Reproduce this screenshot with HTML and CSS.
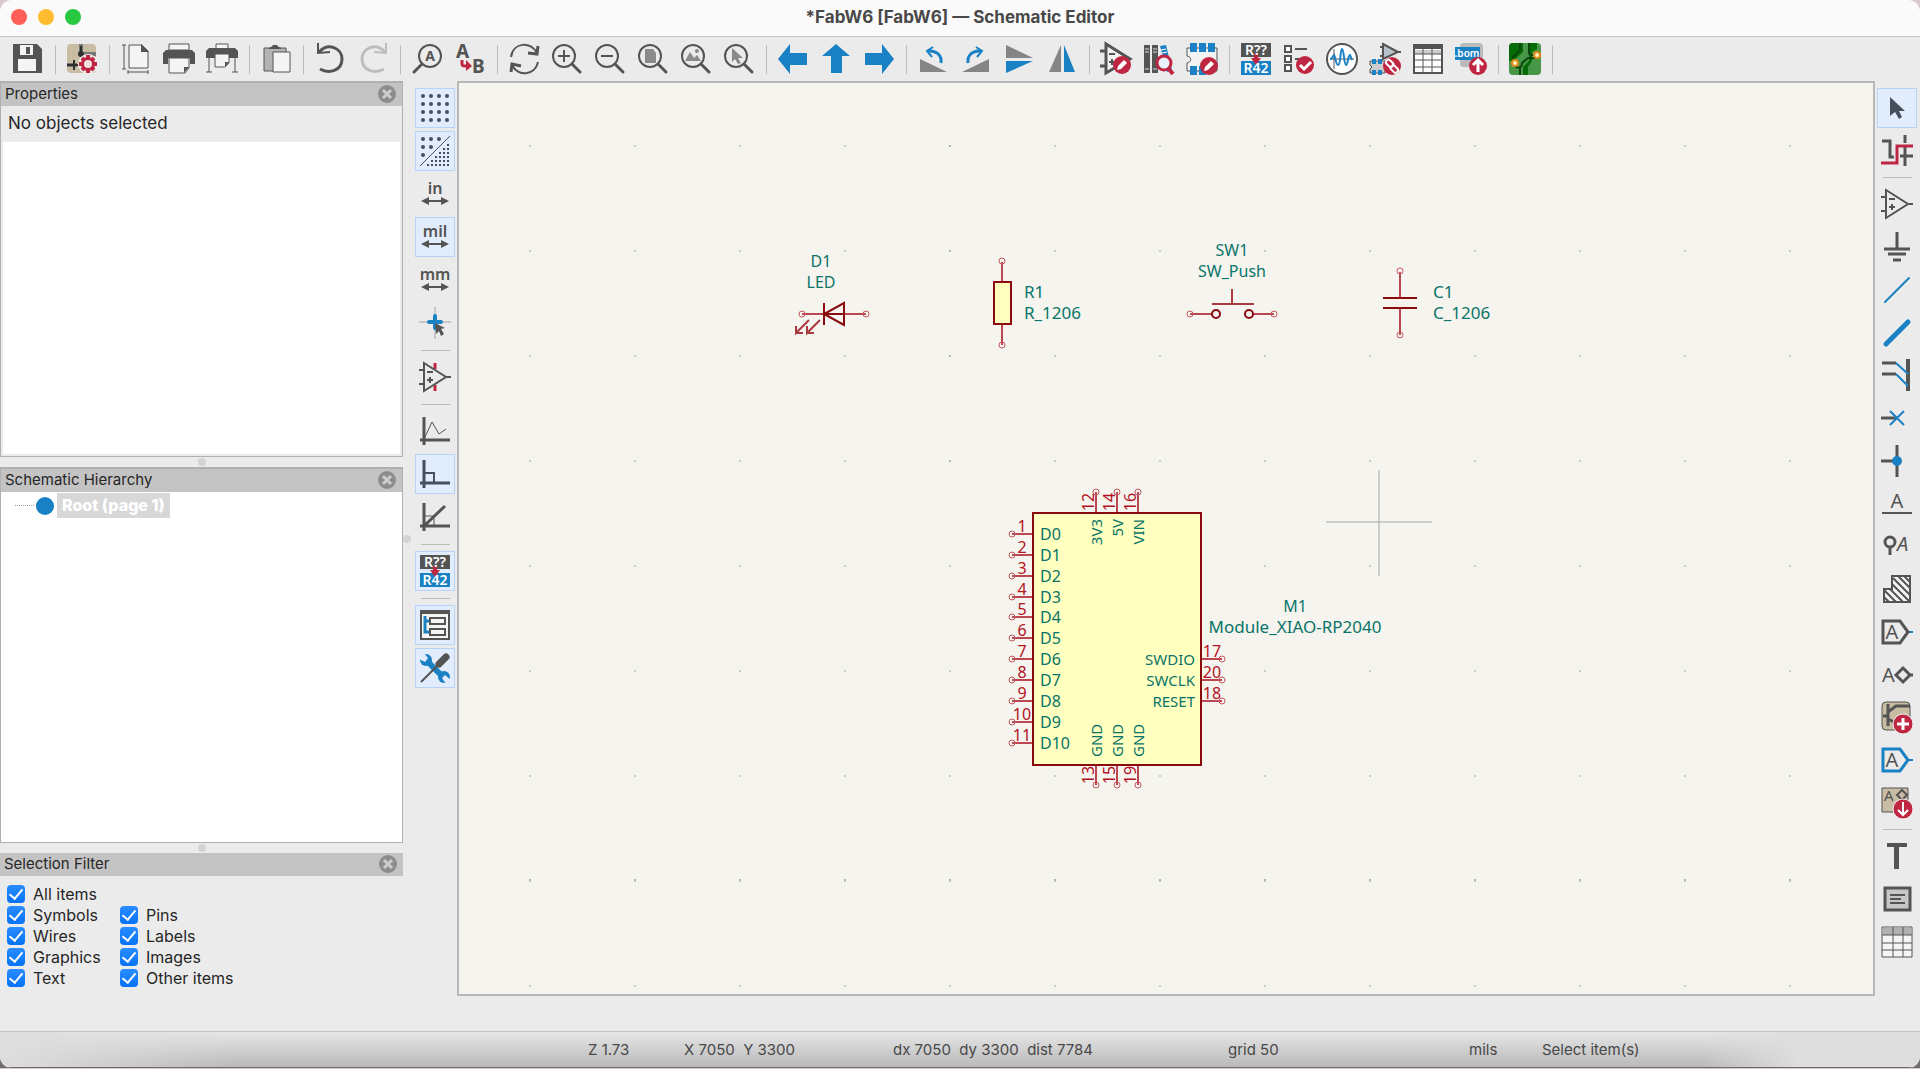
FILE: index.html
```html
<!DOCTYPE html>
<html lang="en">
<head>
<meta charset="UTF-8">
<meta name="viewport" content="width=device-width, initial-scale=1">
<title>*FabW6 [FabW6] — Schematic Editor</title>
<link rel="stylesheet" href="styles.css">
</head>
<body>

<!-- Shared icon parts -->
<svg class="defs" width="0" height="0" aria-hidden="true">
    <defs>
        <symbol id="lens" viewBox="0 0 32 32">
            <circle cx="13" cy="13" r="11" fill="none" stroke="#545454" stroke-width="2"/>
            <path d="M21 21l8 8" stroke="#545454" stroke-width="3" stroke-linecap="round"/>
        </symbol>
        <symbol id="opamp" viewBox="0 0 32 32">
            <path d="M5 2v28L27 16zM0 9h5M0 23h5M27 16h5" fill="none" stroke="#545454" stroke-width="2"/>
            <path d="M8 11h6M8 19h6M11 16v6" stroke="#545454" stroke-width="2"/>
        </symbol>
        <symbol id="pencil" viewBox="0 0 20 20">
            <circle cx="10" cy="10" r="9" fill="#bf2641"/>
            <path d="M5 15l1-4 6-6 3 3-6 6z" fill="#fff"/>
        </symbol>
        <symbol id="annotate" viewBox="0 0 32 32">
            <path d="M1 0h30v14H1z" fill="#545454"/>
            <path d="M1 18h30v14H1z" fill="#1a81c4"/>
            <path d="M14 11h4v4h3l-5 7-5-7h3z" fill="#bf2641"/>
            <text x="16" y="12" text-anchor="middle" class="ico-tag">R??</text>
            <text x="16" y="30" text-anchor="middle" class="ico-tag">R42</text>
        </symbol>
        <symbol id="units" viewBox="0 0 32 12">
            <path d="M7 6h18" stroke="#545454" stroke-width="2"/>
            <path d="M2 6l8-4v8zM30 6l-8-4v8z" fill="#545454"/>
        </symbol>
        <symbol id="close" viewBox="0 0 18 18">
            <circle cx="9" cy="9" r="9" fill="#8c8c8c"/>
            <path d="M5 5l8 8M13 5l-8 8" stroke="#cecece" stroke-width="3"/>
        </symbol>
    </defs>
</svg>

<div class="window">

<header class="titlebar">
    <div class="lights">
        <button class="light red" aria-label="Close"></button>
        <button class="light yellow" aria-label="Minimize"></button>
        <button class="light green" aria-label="Zoom"></button>
    </div>
    <h1>*FabW6 [FabW6] — Schematic Editor</h1>
</header>

<!-- Top toolbar -->
<nav class="toolbar top">
    <button class="tool" aria-label="Save"><svg viewBox="0 0 32 32"><path d="M1 1h24l5 5v24H1z" fill="#545454"/><path d="M8 2h13v10H8zM6 16h18v12H6z" fill="#f4f4f4"/><path d="M14 4h4v7h-4z" fill="#545454"/></svg></button>
    <span class="sep"></span>
    <button class="tool" aria-label="Schematic Setup"><svg viewBox="0 0 32 32"><rect x="1" y="1" width="29" height="29" rx="4" fill="#c8bda2"/><path d="M15 1v9M1 22h10M18 11h12" stroke="#777" stroke-width="4"/><path d="M1 22h11M15 3v10M8 17v10" stroke="#2f2f2f" stroke-width="2"/><circle cx="15" cy="11" r="3" fill="#2f2f2f"/><circle cx="22" cy="21" r="10" fill="#f0eee9"/><path d="M22 12v18M13 21h18M16 15l12 12M28 15L16 27" stroke="#bf2641" stroke-width="4"/><circle cx="22" cy="21" r="7" fill="#bf2641"/><circle cx="22" cy="21" r="4" fill="#eee4df"/></svg></button>
    <span class="sep"></span>
    <button class="tool" aria-label="Page Settings"><svg viewBox="0 0 32 32"><path d="M9 2h13l6 6v17H9z" fill="#f5f5f5" stroke="#545454"/><path d="M21 1v8h8z" fill="#545454"/><path d="M4 2v24M2 2h4M2 26h4M8 29h20M8 27v4M28 27v4" stroke="#545454" stroke-width="1"/></svg></button>
    <button class="tool" aria-label="Print"><svg viewBox="0 0 32 32"><path d="M6 1h20v6H6z" fill="#f5f5f5" stroke="#545454"/><path d="M3 7h26l3 3v11h-5v-6H5v6H0V10z" fill="#545454"/><path d="M6 15h20v10l-4 5H6z" fill="#f5f5f5" stroke="#545454"/><path d="M26 24h-5v6z" fill="#545454"/></svg></button>
    <button class="tool" aria-label="Plot"><svg viewBox="0 0 32 32"><path d="M10 1h12v5H10z" fill="#f5f5f5" stroke="#545454"/><path d="M3 5h26l3 3v7H0V8z" fill="#545454"/><path d="M9 11h14v9l-4 4H9z" fill="#f5f5f5" stroke="#545454"/><path d="M23 19h-4v5z" fill="#545454"/><path d="M3 14v15M29 14v15M0 29h6M26 29h6" stroke="#545454"/></svg></button>
    <span class="sep"></span>
    <button class="tool" aria-label="Paste"><svg viewBox="0 0 32 32"><path d="M4 5h22v23H4z" fill="#b3b3b3" stroke="#545454"/><path d="M9 5c1-1 3-1 4-3h4c1 2 3 2 4 3v1H9z" fill="#545454"/><path d="M13 9h17v20H13z" fill="#f5f5f5" stroke="#545454"/></svg></button>
    <span class="sep"></span>
    <button class="tool" aria-label="Undo"><svg viewBox="0 0 32 32"><path d="M5 9C14-1 28 5 28 16c0 12-13 15-22 10" fill="none" stroke="#545454" stroke-width="3"/><path d="M4 0v10l12-1" fill="none" stroke="#545454" stroke-width="2"/></svg></button>
    <button class="tool" aria-label="Redo" disabled><svg viewBox="0 0 32 32"><path d="M28 9C19-1 5 5 5 16c0 12 13 15 22 10" fill="none" stroke="#bdbdbd" stroke-width="3"/><path d="M29 0v10l-12-1" fill="none" stroke="#bdbdbd" stroke-width="2"/></svg></button>
    <span class="sep"></span>
    <button class="tool" aria-label="Find"><svg viewBox="0 0 32 32"><circle cx="19" cy="13" r="11" fill="none" stroke="#545454" stroke-width="2"/><path d="M11 21l-8 8" stroke="#545454" stroke-width="3" stroke-linecap="round"/><text x="19" y="18" text-anchor="middle" class="ico-bold">A</text></svg></button>
    <button class="tool" aria-label="Find and Replace"><svg viewBox="0 0 32 32"><text x="2" y="15" class="ico-big">A</text><text x="18" y="30" class="ico-big">B</text><path d="M8 17v4q0 2 3 2h3" fill="none" stroke="#bf2641" stroke-width="3"/><path d="M12 17v11l6-5z" fill="#bf2641"/></svg></button>
    <span class="sep"></span>
    <button class="tool" aria-label="Refresh"><svg viewBox="0 0 32 32"><path d="M3 14C5-1 23-2 29 10M30 19C27 33 10 34 4 22" fill="none" stroke="#545454" stroke-width="2"/><path d="M30 3l-1 8-9-1M3 29l1-8 9 2" fill="none" stroke="#545454" stroke-width="3"/></svg></button>
    <button class="tool" aria-label="Zoom In"><svg viewBox="0 0 32 32"><use href="#lens"/><path d="M7 13h12M13 7v12" stroke="#545454" stroke-width="2"/></svg></button>
    <button class="tool" aria-label="Zoom Out"><svg viewBox="0 0 32 32"><use href="#lens"/><path d="M7 13h12" stroke="#545454" stroke-width="2"/></svg></button>
    <button class="tool" aria-label="Zoom to Page"><svg viewBox="0 0 32 32"><use href="#lens"/><path d="M8 6h8l3 4v10H8z" fill="#8a8a8a"/></svg></button>
    <button class="tool" aria-label="Zoom to Objects"><svg viewBox="0 0 32 32"><use href="#lens"/><path d="M5 18l5-9 4 6 3-3 4 6z" fill="#8a8a8a"/><circle cx="17" cy="8" r="2" fill="#8a8a8a"/></svg></button>
    <button class="tool" aria-label="Zoom to Selection"><svg viewBox="0 0 32 32"><use href="#lens"/><path d="M9 5v14l3-3 3 5 3-1-3-5h5z" fill="#8a8a8a"/></svg></button>
    <span class="sep"></span>
    <button class="tool" aria-label="Navigate Back"><svg viewBox="0 0 32 32"><path d="M1 16L13 1v9h17v12H13v9z" fill="#1a81c4"/></svg></button>
    <button class="tool" aria-label="Navigate Up"><svg viewBox="0 0 32 32"><path d="M16 1l14 12h-8v17H11V13H2z" fill="#1a81c4"/></svg></button>
    <button class="tool" aria-label="Navigate Forward"><svg viewBox="0 0 32 32"><path d="M31 16L19 1v9H2v12h17v9z" fill="#1a81c4"/></svg></button>
    <span class="sep"></span>
    <button class="tool" aria-label="Rotate Counterclockwise"><svg viewBox="0 0 32 32"><path d="M3 16v13h27z" fill="#858585"/><path d="M11 8c9-1 14 5 13 12" fill="none" stroke="#1a81c4" stroke-width="3"/><path d="M16 4l-6 4 5 6" fill="none" stroke="#1a81c4" stroke-width="2"/></svg></button>
    <button class="tool" aria-label="Rotate Clockwise"><svg viewBox="0 0 32 32"><path d="M29 16v13H2z" fill="#858585"/><path d="M21 8C12 7 7 13 8 20" fill="none" stroke="#1a81c4" stroke-width="3"/><path d="M16 4l6 4-5 6" fill="none" stroke="#1a81c4" stroke-width="2"/></svg></button>
    <button class="tool" aria-label="Mirror Vertically"><svg viewBox="0 0 32 32"><path d="M3 2v13h27z" fill="#858585"/><path d="M3 30V18h27z" fill="#1a81c4"/></svg></button>
    <button class="tool" aria-label="Mirror Horizontally"><svg viewBox="0 0 32 32"><path d="M3 29h12V2z" fill="#858585"/><path d="M29 29H18V2z" fill="#1a81c4"/></svg></button>
    <span class="sep"></span>
    <button class="tool" aria-label="Symbol Editor"><svg viewBox="0 0 32 32"><path d="M6 1v29l24-14zM0 8h6M0 23h6" fill="#f2f2f2" stroke="#545454" stroke-width="3"/><path d="M9 11h6M9 19h6M12 16v6" stroke="#545454" stroke-width="2"/><use href="#pencil" x="12" y="12" width="20" height="20"/></svg></button>
    <button class="tool" aria-label="Symbol Library Browser"><svg viewBox="0 0 32 32"><path d="M1 2h6v28H1zM9 2h6v28H9z" fill="#545454"/><path d="M2 6h4M2 9h4M2 26h4M10 6h4M10 9h4M10 26h4" stroke="#ddd"/><path d="M17 3l6-1 6 25-5 2z" fill="#1a81c4"/><path d="M18 7l5-1M19 10l5-1" stroke="#fff"/><path d="M25 25l5 6" stroke="#bf2641" stroke-width="4"/><circle cx="21" cy="20" r="7" fill="#e9f1fa" stroke="#bf2641" stroke-width="3"/></svg></button>
    <button class="tool" aria-label="Footprint Editor"><svg viewBox="0 0 32 32"><path d="M1 5h30v23H1v-8c5-1 5-6 0-7z" fill="#f3f3f3" stroke="#545454"/><path d="M4 0h7v9H4zM13 0h7v9h-7zM22 0h7v9h-7zM4 23h7v9H4zM13 23h7v9h-7z" fill="#1a81c4"/><use href="#pencil" x="13" y="13" width="20" height="20"/></svg></button>
    <span class="sep"></span>
    <button class="tool" aria-label="Annotate"><svg viewBox="0 0 32 32"><use href="#annotate"/></svg></button>
    <button class="tool" aria-label="Electrical Rules Checker"><svg viewBox="0 0 32 32"><path d="M2 3h6v6H2zM2 13h6v6H2zM2 22h6v6H2z" fill="#fff" stroke="#545454" stroke-width="2"/><path d="M12 6h12M12 16h12" stroke="#545454" stroke-width="2"/><circle cx="22" cy="22" r="9" fill="#bf2641"/><path d="M17 22l4 4 7-7" fill="none" stroke="#fff" stroke-width="3"/></svg></button>
    <button class="tool" aria-label="Simulator"><svg viewBox="0 0 32 32"><circle cx="16" cy="16" r="15" fill="#fff" stroke="#545454" stroke-width="2"/><path d="M8 6v20M4 16h24" stroke="#545454"/><path d="M4 16c3 0 3-4 4-4s2 10 4 10c3 0 2-16 4-16s2 16 4 16c2 0 2-10 4-10l2 5" fill="none" stroke="#1a81c4" stroke-width="2"/></svg></button>
    <button class="tool" aria-label="Assign Footprints"><svg viewBox="0 0 32 32"><path d="M14 1v15l15-7zM11 4h3M11 13h3M28 9h4" fill="#b8c2cc" stroke="#545454" stroke-width="2"/><path d="M1 18h15v12H1v-4l2-2-2-2z" fill="#ccc" stroke="#545454"/><path d="M3 16h4v5H3zM9 16h4v5H9zM3 27h4v5H3zM9 27h4v5H9z" fill="#1a81c4"/><circle cx="23" cy="23" r="9" fill="#bf2641"/><g fill="none" stroke="#fff" stroke-width="2"><rect x="17" y="18" width="8" height="5" rx="2" transform="rotate(45 21 20)"/><rect x="22" y="23" width="8" height="5" rx="2" transform="rotate(45 25 25)"/></g></svg></button>
    <button class="tool" aria-label="Edit Symbol Fields"><svg viewBox="0 0 32 32"><path d="M2 2h28v28H2z" fill="#fff" stroke="#545454" stroke-width="2"/><path d="M2 2h28v4H2z" fill="#545454"/><path d="M3 7h26v4H3z" fill="#ccc"/><path d="M2 11h28M2 17h28M2 24h28M11 6v24M20 6v24" stroke="#545454"/></svg></button>
    <button class="tool" aria-label="Generate Bill of Materials"><svg viewBox="0 0 32 32"><rect x="5" y="0" width="23" height="24" rx="4" fill="#bbb"/><path d="M0 4h25v13H0z" fill="#1a81c4"/><text x="12" y="14" text-anchor="middle" class="ico-bom">.bom</text><circle cx="23" cy="23" r="9" fill="#bf2641"/><path d="M23 29V18M18 22l5-5 5 5" fill="none" stroke="#fff" stroke-width="3"/></svg></button>
    <span class="sep"></span>
    <button class="tool" aria-label="Open PCB"><svg viewBox="0 0 32 32"><rect width="32" height="32" rx="4" fill="#489648"/><path d="M0 4q0-4 4-4h10v9L2 20v-2H0zM14 32v-8l6-6V0h8v6l-5 3v9l-4 6v8z" fill="#066b06"/><path d="M11 0v7l-8 8M20 0v10q0 2 3 2h5M7 20v4q6 2 6-4l6-5h9M11 32v-7" fill="none" stroke="#0a460a" stroke-width="2"/><circle cx="6" cy="20" r="3" fill="#fff4c0" stroke="#e08a1c" stroke-width="2"/><circle cx="28" cy="12" r="3" fill="#fff4c0" stroke="#e08a1c" stroke-width="2"/></svg></button>
    <span class="sep"></span>
</nav>

<main class="workspace">

<!-- Docked panels -->
<aside class="panels">
    <section class="pane">
        <div class="pane-head"><h2>Properties</h2><button class="close" aria-label="Close Properties"><svg viewBox="0 0 18 18"><use href="#close"/></svg></button></div>
        <p class="status-line">No objects selected</p>
        <div class="prop-grid"></div>
    </section>
    <div class="sash"></div>
    <section class="pane white">
        <div class="pane-head"><h2>Schematic Hierarchy</h2><button class="close" aria-label="Close Hierarchy"><svg viewBox="0 0 18 18"><use href="#close"/></svg></button></div>
        <div class="tree-row"><span class="branch"></span><span class="node"></span><span class="sheet">Root (page 1)</span></div>
    </section>
    <div class="sash"></div>
    <section class="filter">
        <div class="pane-head"><h2>Selection Filter</h2><button class="close" aria-label="Close Filter"><svg viewBox="0 0 18 18"><use href="#close"/></svg></button></div>
        <div class="checks">
            <label class="wide"><input type="checkbox" checked>All items</label>
            <label><input type="checkbox" checked>Symbols</label>
            <label><input type="checkbox" checked>Pins</label>
            <label><input type="checkbox" checked>Wires</label>
            <label><input type="checkbox" checked>Labels</label>
            <label><input type="checkbox" checked>Graphics</label>
            <label><input type="checkbox" checked>Images</label>
            <label><input type="checkbox" checked>Text</label>
            <label><input type="checkbox" checked>Other items</label>
        </div>
    </section>
</aside>

<div class="sash vertical"></div>

<!-- Left toolbar -->
<nav class="toolbar left">
    <button class="tool on" aria-label="Show Grid"><svg viewBox="0 0 32 32"><path d="M4 4h25M4 12h25M4 20h25M4 28h25" stroke="#46505c" stroke-width="4" stroke-linecap="round" stroke-dasharray="0 8"/></svg></button>
    <button class="tool on" aria-label="Grid Overrides"><svg viewBox="0 0 32 32"><path d="M4 4h17M4 12h9M4 20h1" stroke="#46505c" stroke-width="4" stroke-linecap="round" stroke-dasharray="0 8"/><path d="M1 31L31 1" stroke="#46505c"/><path d="M28 10h3M24 14h7M20 18h11M16 22h15M12 26h19M8 30h23" stroke="#46505c" stroke-width="2" stroke-dasharray="2 2"/></svg></button>
    <button class="tool" aria-label="Inches"><svg viewBox="0 0 32 32"><text x="16" y="16" text-anchor="middle" class="ico-unit">in</text><use href="#units" y="17" width="32" height="12"/></svg></button>
    <button class="tool on" aria-label="Mils"><svg viewBox="0 0 32 32"><text x="16" y="16" text-anchor="middle" class="ico-unit">mil</text><use href="#units" y="17" width="32" height="12"/></svg></button>
    <button class="tool" aria-label="Millimeters"><svg viewBox="0 0 32 32"><text x="16" y="16" text-anchor="middle" class="ico-unit">mm</text><use href="#units" y="17" width="32" height="12"/></svg></button>
    <button class="tool" aria-label="Full-Window Crosshairs"><svg viewBox="0 0 32 32"><path d="M0 15h32M16 0v32" stroke="#a5a5a5"/><path d="M10 15h12M16 9v12" stroke="#1a81c4" stroke-width="4" stroke-linecap="round"/><path d="M16 16l10 5-4 1 3 5-3 2-2-5-3 3z" fill="#545454"/></svg></button>
    <span class="sep"></span>
    <button class="tool" aria-label="Show Hidden Pins"><svg viewBox="0 0 32 32"><path d="M16 2v6M16 24v6" stroke="#bf2641" stroke-width="3"/><use href="#opamp"/></svg></button>
    <span class="sep"></span>
    <button class="tool" aria-label="Free Angle Lines"><svg viewBox="0 0 32 32"><path d="M5 2v28M1 25h30" stroke="#545454" stroke-width="3"/><path d="M5 24l8-17 7 12 7-5" fill="none" stroke="#545454"/></svg></button>
    <button class="tool on" aria-label="90 Degree Lines"><svg viewBox="0 0 32 32"><path d="M5 2v28M1 25h30" stroke="#46505c" stroke-width="3"/><path d="M5 15h10v10" fill="none" stroke="#46505c" stroke-width="2"/></svg></button>
    <button class="tool" aria-label="45 Degree Lines"><svg viewBox="0 0 32 32"><path d="M5 2v28M1 25h30M5 25L26 5" stroke="#545454" stroke-width="3"/><path d="M5 15h10v10" fill="none" stroke="#545454"/></svg></button>
    <span class="sep"></span>
    <button class="tool on" aria-label="Annotate Automatically"><svg viewBox="0 0 32 32"><use href="#annotate"/></svg></button>
    <span class="sep"></span>
    <button class="tool on" aria-label="Schematic Hierarchy"><svg viewBox="0 0 32 32"><path d="M2 2h28v28H2z" fill="#f5f5f5" stroke="#545454" stroke-width="2"/><path d="M2 2h28v3H2z" fill="#545454"/><path d="M6 7v16h5M6 12h5" fill="none" stroke="#1a81c4" stroke-width="3"/><path d="M11 9h15v6H11zM11 20h15v6H11z" fill="#f5f5f5" stroke="#545454" stroke-width="2"/></svg></button>
    <button class="tool on" aria-label="Properties"><svg viewBox="0 0 32 32"><path d="M7 8l18 18" stroke="#1a81c4" stroke-width="6"/><circle cx="7" cy="8" r="6" fill="#1a81c4"/><circle cx="25" cy="25" r="6" fill="#1a81c4"/><path d="M0 3l4-3 5 6-3 4-6-3zM32 28l-5 4-4-6 3-3z" fill="#e1edfc"/><path d="M2 30L20 12" stroke="#545454" stroke-width="2"/><path d="M20 12l7-7" stroke="#545454" stroke-width="7" stroke-linecap="round"/></svg></button>
</nav>

<!-- Schematic sheet -->
<div class="canvas">
<svg width="100%" height="100%" role="img" aria-label="Schematic">
    <defs>
        <pattern id="grid" x="477" y="94" width="105" height="105" patternUnits="userSpaceOnUse" patternTransform="translate(-459 -83)">
            <circle cx="53" cy="52" r="1" fill="#bfbfba"/>
        </pattern>
    </defs>
    <rect width="100%" height="100%" fill="url(#grid)"/>

    <g transform="translate(-459 -83)">
        <path class="major" d="M949 146h2M949 251h2M949 356h2M949 461h2M529 880h2M634 880h2M739 880h2M844 880h2M949 880h2M1054 880h2M1159 880h2M1264 880h2M1369 880h2M1474 880h2M1579 880h2M1684 880h2M1789 880h2"/>
        <path class="cursor" d="M1326 522h106M1379 470v106"/>

        <!-- D1 -->
        <g>
            <path class="pin" d="M802 314h22M844 314h22"/>
            <path class="body" d="M824 303v22M844 303v22L824 314zM824 314h20"/>
            <path class="thin" d="M809 320l-13 13v-7M796 333h7M820 320l-13 13v-7M807 333h7"/>
            <circle class="end" cx="802" cy="314" r="3"/><circle class="end" cx="866" cy="314" r="3"/>
            <text class="field mid" x="821" y="267">D1</text>
            <text class="field mid" x="821" y="288">LED</text>
        </g>

        <!-- R1 -->
        <g>
            <path class="pin" d="M1002 262v20M1002 325v20"/>
            <rect class="body fill" x="994" y="282" width="17" height="42"/>
            <circle class="end" cx="1002" cy="261" r="3"/><circle class="end" cx="1002" cy="345" r="3"/>
            <text class="field label" x="1024" y="298">R1</text>
            <text class="field label" x="1024" y="319">R_1206</text>
        </g>

        <!-- SW1 -->
        <g>
            <path class="pin" d="M1190 314h22M1253 314h21"/>
            <path class="thin" d="M1232 289v14M1212 304h42"/>
            <circle class="body" cx="1216" cy="314" r="4"/><circle class="body" cx="1249" cy="314" r="4"/>
            <circle class="end" cx="1190" cy="314" r="3"/><circle class="end" cx="1274" cy="314" r="3"/>
            <text class="field mid" x="1232" y="256">SW1</text>
            <text class="field mid" x="1232" y="277">SW_Push</text>
        </g>

        <!-- C1 -->
        <g>
            <path class="pin" d="M1400 272v26M1400 308v27"/>
            <path class="body" d="M1383 298h34M1383 308h34"/>
            <circle class="end" cx="1400" cy="271" r="3"/><circle class="end" cx="1400" cy="335" r="3"/>
            <text class="field label" x="1433" y="298">C1</text>
            <text class="field label" x="1433" y="319">C_1206</text>
        </g>

        <!-- M1 -->
        <g>
            <path class="pin" d="M1012 534h21M1012 555h21M1012 576h21M1012 597h21M1012 617h21M1012 638h21M1012 659h21M1012 680h21M1012 701h21M1012 722h21M1012 743h21"/>
            <path class="pin" d="M1202 659h20M1202 680h20M1202 701h20M1096 492v20M1117 492v20M1138 492v20M1096 765v20M1117 765v20M1138 765v20"/>
            <rect class="body fill" x="1033" y="513" width="168" height="252"/>
            <g class="end">
                <circle cx="1012" cy="534" r="3"/><circle cx="1012" cy="555" r="3"/><circle cx="1012" cy="576" r="3"/><circle cx="1012" cy="597" r="3"/>
                <circle cx="1012" cy="617" r="3"/><circle cx="1012" cy="638" r="3"/><circle cx="1012" cy="659" r="3"/><circle cx="1012" cy="680" r="3"/>
                <circle cx="1012" cy="701" r="3"/><circle cx="1012" cy="722" r="3"/><circle cx="1012" cy="743" r="3"/>
                <circle cx="1222" cy="659" r="3"/><circle cx="1222" cy="680" r="3"/><circle cx="1222" cy="701" r="3"/>
                <circle cx="1096" cy="492" r="3"/><circle cx="1117" cy="492" r="3"/><circle cx="1138" cy="492" r="3"/>
                <circle cx="1096" cy="785" r="3"/><circle cx="1117" cy="785" r="3"/><circle cx="1138" cy="785" r="3"/>
            </g>
            <g class="num">
                <text x="1022" y="532">1</text><text x="1022" y="553">2</text><text x="1022" y="574">3</text><text x="1022" y="595">4</text>
                <text x="1022" y="615">5</text><text x="1022" y="636">6</text><text x="1022" y="657">7</text><text x="1022" y="678">8</text>
                <text x="1022" y="699">9</text><text x="1022" y="720">10</text><text x="1022" y="741">11</text>
                <text x="1212" y="657">17</text><text x="1212" y="678">20</text><text x="1212" y="699">18</text>
                <text transform="translate(1094 502) rotate(-90)">12</text><text transform="translate(1115 502) rotate(-90)">14</text><text transform="translate(1136 502) rotate(-90)">16</text>
                <text transform="translate(1094 775) rotate(-90)">13</text><text transform="translate(1115 775) rotate(-90)">15</text><text transform="translate(1136 775) rotate(-90)">19</text>
            </g>
            <g class="field">
                <text x="1040" y="540">D0</text><text x="1040" y="561">D1</text><text x="1040" y="582">D2</text><text x="1040" y="603">D3</text>
                <text x="1040" y="623">D4</text><text x="1040" y="644">D5</text><text x="1040" y="665">D6</text><text x="1040" y="686">D7</text>
                <text x="1040" y="707">D8</text><text x="1040" y="728">D9</text><text x="1040" y="749">D10</text>
            </g>
            <g class="field name">
                <text transform="translate(1102 757) rotate(-90)">GND</text><text transform="translate(1123 757) rotate(-90)">GND</text><text transform="translate(1144 757) rotate(-90)">GND</text>
            </g>
            <g class="field name right">
                <text x="1195" y="665">SWDIO</text><text x="1195" y="686">SWCLK</text><text x="1195" y="707">RESET</text>
                <text transform="translate(1102 519) rotate(-90)">3V3</text><text transform="translate(1123 519) rotate(-90)">5V</text><text transform="translate(1144 519) rotate(-90)">VIN</text>
            </g>
            <text class="field mid" x="1295" y="612">M1</text>
            <text class="field label mid" x="1295" y="633">Module_XIAO-RP2040</text>
        </g>
    </g>
</svg>
</div>

<!-- Right toolbar -->
<nav class="toolbar right-bar">
    <button class="tool on" aria-label="Select"><svg viewBox="0 0 32 32"><path d="M9 5v19l5-4 4 7 3-2-3-6h6z" fill="#46505c"/></svg></button>
    <button class="tool" aria-label="Highlight Net"><svg viewBox="0 0 32 32"><path d="M1 6h8v16h4M24 0v8M24 12v19M19 21h13" fill="none" stroke="#545454" stroke-width="3"/><path d="M0 28h16V11h16" fill="none" stroke="#bf2641" stroke-width="3"/></svg></button>
    <span class="sep"></span>
    <button class="tool" aria-label="Place Symbols"><svg viewBox="0 0 32 32"><use href="#opamp"/></svg></button>
    <button class="tool" aria-label="Place Power"><svg viewBox="0 0 32 32"><path d="M16 1v17M3 18h26M7 23h18M12 29h8" stroke="#545454" stroke-width="3"/></svg></button>
    <button class="tool" aria-label="Draw Wires"><svg viewBox="0 0 32 32"><path d="M4 28L28 4" stroke="#1a81c4" stroke-width="2" stroke-linecap="round"/></svg></button>
    <button class="tool" aria-label="Draw Buses"><svg viewBox="0 0 32 32"><path d="M5 27L27 5" stroke="#1a81c4" stroke-width="5" stroke-linecap="round"/></svg></button>
    <button class="tool" aria-label="Bus Entries"><svg viewBox="0 0 32 32"><path d="M27 0v32" stroke="#545454" stroke-width="4"/><path d="M1 4h14M1 15h14" stroke="#545454" stroke-width="3"/><path d="M15 4l12 11M15 15l12 12" stroke="#1a81c4" stroke-width="2"/></svg></button>
    <button class="tool" aria-label="No Connect Flags"><svg viewBox="0 0 32 32"><path d="M0 16h16" stroke="#545454" stroke-width="3"/><path d="M9 9l14 14M23 9L9 23" stroke="#1a81c4" stroke-width="2"/></svg></button>
    <button class="tool" aria-label="Junctions"><svg viewBox="0 0 32 32"><path d="M0 16h16M16 0v32" stroke="#545454" stroke-width="3"/><circle cx="16" cy="16" r="5" fill="#1a81c4"/></svg></button>
    <button class="tool" aria-label="Net Labels"><svg viewBox="0 0 32 32"><text x="16" y="20" text-anchor="middle" class="ico-letter">A</text><path d="M1 25h30" stroke="#545454" stroke-width="2"/></svg></button>
    <button class="tool" aria-label="Net Class Directives"><svg viewBox="0 0 32 32"><circle cx="9" cy="12" r="5" fill="none" stroke="#545454" stroke-width="3"/><path d="M9 17v8" stroke="#545454" stroke-width="3"/><text x="16" y="21" class="ico-letter slant">A</text></svg></button>
    <button class="tool" aria-label="Rule Areas"><svg viewBox="0 0 32 32"><path d="M3 29V16h8V3h18v26z" fill="#f5f5f5" stroke="#545454" stroke-width="2"/><path d="M12 5l17 17M17 3l12 12M23 3l6 6M11 11l18 18M9 16l13 13M3 17l12 12M3 24l5 5" stroke="#545454" stroke-width="2"/></svg></button>
    <button class="tool" aria-label="Global Labels"><svg viewBox="0 0 32 32"><path d="M26 16h6" stroke="#1a81c4" stroke-width="2"/><path d="M2 5h17l8 11-8 11H2z" fill="none" stroke="#545454" stroke-width="3"/><text x="11" y="23" text-anchor="middle" class="ico-letter">A</text></svg></button>
    <button class="tool" aria-label="Hierarchical Labels"><svg viewBox="0 0 32 32"><text x="1" y="23" class="ico-letter">A</text><path d="M22 9l7 7-7 7-7-7zM29 16h3" fill="none" stroke="#545454" stroke-width="3"/></svg></button>
    <button class="tool" aria-label="Draw Hierarchical Sheets"><svg viewBox="0 0 32 32"><rect x="1" y="1" width="28" height="28" rx="4" fill="#c8bda2" stroke="#545454"/><path d="M7 3v22M2 15h5M7 11l8-6h14M7 18l8 4" fill="none" stroke="#545454" stroke-width="3"/><circle cx="22" cy="23" r="10" fill="#bf2641" stroke="#eee"/><path d="M22 17v12M16 23h12" stroke="#fff" stroke-width="3"/></svg></button>
    <button class="tool" aria-label="Sheet Pins"><svg viewBox="0 0 32 32"><path d="M27 16h5" stroke="#1a81c4" stroke-width="2"/><path d="M2 5h17l8 11-8 11H2z" fill="none" stroke="#1a81c4" stroke-width="3"/><text x="11" y="23" text-anchor="middle" class="ico-letter">A</text></svg></button>
    <button class="tool" aria-label="Import Sheet Pins"><svg viewBox="0 0 32 32"><path d="M1 1h26v24H1z" fill="#c8bda2" stroke="#545454"/><text x="3" y="14" class="ico-small">A</text><path d="M21 3l5 5-5 5-5-5z" fill="none" stroke="#545454" stroke-width="2"/><circle cx="22" cy="22" r="10" fill="#bf2641" stroke="#eee"/><path d="M22 15v12M17 23l5 5 5-5" fill="none" stroke="#fff" stroke-width="2"/></svg></button>
    <span class="sep"></span>
    <button class="tool" aria-label="Text"><svg viewBox="0 0 32 32"><path d="M6 3h20v4h-8v22h-5V7H6z" fill="#545454"/></svg></button>
    <button class="tool" aria-label="Text Boxes"><svg viewBox="0 0 32 32"><rect x="4" y="5" width="25" height="22" fill="#c6c6c6" stroke="#545454" stroke-width="3"/><path d="M9 12h15M9 16h11M9 20h15" stroke="#545454" stroke-width="2"/></svg></button>
    <button class="tool" aria-label="Tables"><svg viewBox="0 0 32 32"><path d="M1 1h30v30H1z" fill="#f5f5f5" stroke="#545454"/><path d="M2 2h28v7H2z" fill="#b0b0b0"/><path d="M1 9h30M1 17h30M1 24h30M12 1v30M22 1v30" stroke="#545454" stroke-width="1"/></svg></button>
</nav>

</main>

<!-- Status bar -->
<footer class="statusbar">
    <span class="zoom">Z 1.73</span>
    <span class="pos">X 7050&nbsp; Y 3300</span>
    <span class="delta">dx 7050&nbsp; dy 3300&nbsp; dist 7784</span>
    <span class="step">grid 50</span>
    <span class="unit">mils</span>
    <span>Select item(s)</span>
</footer>

</div>
</body>
</html>
```
FILE: styles.css
```css
* {
    box-sizing: border-box;
}

body {
    margin: 0;
    background: linear-gradient(180deg, #d9c9cf, #6f6f70);
    font-family: Inter, "Liberation Sans", sans-serif;
    font-size: 15px;
    color: #262626;
}

h1, h2, p {
    margin: 0;
}

button {
    padding: 0;
    border: none;
    background: none;
}

.defs {
    position: absolute;
}

.window {
    display: flex;
    flex-direction: column;
    height: calc(100vh - 1px);
    border-radius: 12px;
    overflow: hidden;
    background: #ebebeb;
}

/* Title bar */
.titlebar {
    display: grid;
    grid-template-columns: 1fr auto 1fr;
    align-items: center;
    height: 37px;
    flex: none;
    padding: 0 11px 2px;
    background: #fafafa;
    border-bottom: 1px solid #c6c6c6;
}

.titlebar h1 {
    font-size: 17px;
    font-weight: 700;
    line-height: 34px;
    color: #484848;
}

.lights {
    display: flex;
    gap: 11px;
}

.light {
    width: 16px;
    height: 16px;
    border-radius: 50%;
}

.red { background: #ff5f57; }
.yellow { background: #febc2e; }
.green { background: #28c840; }

/* Toolbars */
.toolbar {
    display: flex;
    align-items: center;
    flex: none;
    gap: 3px;
}

.toolbar.top {
    height: 44px;
    padding-left: 8px;
}

.toolbar.left,
.toolbar.right-bar {
    flex-direction: column;
    width: 40px;
    padding-top: 7px;
}

.toolbar.left {
    margin-right: 2px;
}

.toolbar.right-bar {
    justify-content: space-between;
    gap: 0;
    margin: 0 3px 0 2px;
    padding-bottom: 34px;
}

.tool {
    display: flex;
    align-items: center;
    justify-content: center;
    flex: none;
    width: 40px;
    height: 40px;
    border: 1px solid transparent;
}

.tool.on {
    background: #e1edfc;
    border-color: #b7d4f7;
}

.tool svg {
    width: 32px;
    height: 32px;
    overflow: visible;
}

symbol {
    overflow: visible;
}

.sep {
    flex: none;
    display: flex;
    align-items: center;
    justify-content: center;
    width: 8px;
    height: 29px;
}

.sep::before {
    content: "";
    width: 1px;
    height: 100%;
    background: #bcbcbc;
}

.left .sep,
.right-bar .sep {
    width: 29px;
    height: 8px;
}

.left .sep::before,
.right-bar .sep::before {
    width: 100%;
    height: 1px;
}

/* Letters inside icons */
.tool text {
    font-family: "Noto Sans", sans-serif;
    fill: #545454;
}

.tool .ico-bold { font-size: 14px; font-weight: 700; }
.tool .ico-big { font-size: 19px; font-weight: 700; }
.tool .ico-letter { font-size: 20px; }
.tool .ico-small { font-size: 15px; }
.tool .ico-unit { font-size: 16px; font-weight: 600; }
.tool .slant { font-style: italic; }

.ico-tag {
    font-family: "Noto Sans", sans-serif;
    font-size: 14px;
    font-weight: 600;
}

symbol .ico-tag,
.tool .ico-bom {
    fill: #fff;
}

.tool .ico-bom { font-size: 10px; font-weight: 600; }

/* Workspace */
.workspace {
    display: flex;
    flex: 1;
    min-height: 0;
    padding-bottom: 35px;
}

.panels {
    display: flex;
    flex-direction: column;
    flex: none;
    width: 403px;
}

.pane {
    display: flex;
    flex-direction: column;
    flex: 1;
    border: 1px solid #b0b0b0;
    border-top-width: 2px;
}

.pane.white {
    background: #fff;
}

.pane-head {
    display: flex;
    align-items: center;
    justify-content: space-between;
    height: 23px;
    flex: none;
    padding: 0 6px 2px 4px;
    background: #c3c3c3;
}

.pane-head h2 {
    font-size: 15px;
    font-weight: 400;
}

.close svg {
    display: block;
    width: 18px;
    height: 18px;
}

.status-line {
    padding: 0 7px 2px;
    font-size: 17px;
    line-height: 34px;
}

.prop-grid {
    flex: 1;
    margin: 0 2px 2px;
    background: #fff;
}

.sash {
    display: flex;
    align-items: center;
    justify-content: center;
    flex: none;
    height: 10px;
}

.sash::before {
    content: "";
    width: 8px;
    height: 8px;
    border-radius: 50%;
    background: #d3d3d3;
}

.sash.vertical {
    width: 12px;
    height: auto;
    padding-right: 4px;
}

.tree-row {
    display: flex;
    align-items: center;
    padding: 1px 0 0 14px;
}

.branch {
    width: 19px;
    border-top: 1px dotted #999;
}

.node {
    width: 18px;
    height: 18px;
    margin: 0 3px 0 2px;
    border-radius: 50%;
    background: #1a81c4;
}

.sheet {
    padding: 0 5px;
    background: #d8d8d8;
    color: #fff;
    font-size: 16px;
    font-weight: 800;
    line-height: 25px;
}

.filter {
    flex: none;
    height: 143px;
}

.checks {
    display: grid;
    grid-template-columns: 113px auto;
    justify-content: start;
    grid-auto-rows: 21px;
    padding: 7px;
}

.checks .wide {
    grid-column: span 2;
}

.checks label {
    display: flex;
    align-items: center;
    gap: 8px;
    font-size: 16px;
}

.checks input {
    appearance: none;
    display: grid;
    place-items: center;
    flex: none;
    width: 18px;
    height: 18px;
    margin: 0;
    border-radius: 4px;
    background: linear-gradient(#2a8cff, #0673f5);
}

.checks input:checked::before {
    content: "";
    width: 6px;
    height: 11px;
    margin-bottom: 3px;
    border: solid #fff;
    border-width: 0 2px 2px 0;
    transform: rotate(40deg);
}

/* Canvas */
.canvas {
    flex: 1;
    min-width: 0;
    border: 2px solid #b8b8b8;
    background: #f5f4ef;
    overflow: hidden;
}

.canvas svg {
    display: block;
}

.canvas text {
    font-family: "Noto Sans", "Open Sans", sans-serif;
    font-size: 16px;
}

.canvas .label { font-size: 17px; }
.canvas .name text { font-size: 15px; }

.major { stroke: #b5b5b0; stroke-width: 2; }
.cursor { stroke: #a5a5a2; stroke-width: 1; }
.pin { stroke: #bb4850; stroke-width: 2; fill: none; }
.thin { stroke: #a83a40; stroke-width: 2; fill: none; }
.body { stroke: #8a0a10; stroke-width: 2; fill: none; }
.fill { fill: #ffffbf; }
.end { stroke: #c8585f; stroke-width: 1; fill: none; }
.field { fill: #0a7468; }
.mid, .num { text-anchor: middle; }
.right { text-anchor: end; }
.num { fill: #b3121f; }

/* Status bar */
.statusbar {
    display: flex;
    align-items: center;
    height: 37px;
    flex: none;
    padding-left: 588px;
    border-top: 1px solid #c4c4c4;
    background:
        linear-gradient(90deg, #dedede 0, rgba(222, 222, 222, 0) 240px, rgba(222, 222, 222, 0) calc(100% - 220px), #dedede calc(100% - 120px)),
        linear-gradient(#e6e6e6, #b9b9b9);
    border-bottom: 1px solid #6a6a6a;
    font-size: 15px;
    color: #484848;
}

.zoom { width: 96px; }
.pos { width: 209px; }
.delta { width: 335px; }
.step { width: 241px; }
.unit { width: 73px; }
```
